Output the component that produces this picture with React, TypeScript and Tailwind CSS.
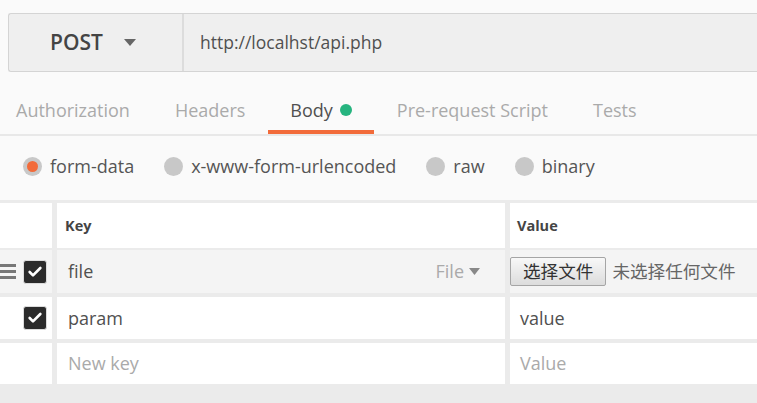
import { Check } from "lucide-react";

const font = { fontFamily: '"Open Sans", "Noto Sans CJK SC", sans-serif' };

function Radio({ label, on }: { label: string; on?: boolean }) {
  return (
    <div className="flex items-center">
      <div className="w-[19px] h-[19px] rounded-full bg-[#c8c8c8] flex items-center justify-center">
        {on && <div className="w-[11px] h-[11px] rounded-full bg-[#f26b3a]" />}
      </div>
      <span className="ml-[8px] text-[18px] text-[#555]">{label}</span>
    </div>
  );
}

function Box() {
  return (
    <div className="w-[24px] h-[24px] rounded-[3px] bg-[#2b2b2b] border border-[#dcdcdc] flex items-center justify-center">
      <Check size={16} strokeWidth={4} color="#fff" />
    </div>
  );
}

export default function App() {
  const tabs = ["Authorization", "Headers", "Body", "Pre-request Script", "Tests"];
  return (
    <div className="w-[757px] h-[403px] overflow-hidden bg-[#fafafa] flex flex-col" style={font}>
      <div className="pt-[13px] pl-[8px]">
        <div className="h-[59px] flex border border-r-0 border-[#d4d4d4] rounded-l-[3px] bg-[#efefef]">
          <div className="w-[175px] border-r-2 border-[#dcdcdc] flex items-center">
            <span className="ml-[41px] text-[21px] font-semibold text-[#444]">POST</span>
            <svg className="ml-[21px]" width="12" height="7" viewBox="0 0 12 7"><path d="M0 0h12L6 7z" fill="#666" /></svg>
          </div>
          <div className="flex items-center pl-[16px] text-[17.5px] text-[#505050]">http://localhst/api.php</div>
        </div>
      </div>

      <div className="h-[64px] flex border-b-2 border-[#e8e8e8] pl-[16px]">
        {tabs.map((t, i) => (
          <div
            key={t}
            className={`h-full flex items-center pt-[18px] border-b-4 ${t === "Body" ? "border-[#f26b3a] text-[#505050]" : "border-transparent text-[#aaa]"} ${i === 0 ? "pr-[22.5px]" : "px-[22.5px]"} text-[18px]`}
          >
            {t}
            {t === "Body" && <span className="ml-[7px] w-[12px] h-[12px] rounded-full bg-[#26b47f]" />}
          </div>
        ))}
      </div>

      <div className="h-[64px] flex items-center gap-[30px] pl-[23px] pb-[4px]">
        <Radio label="form-data" on />
        <Radio label="x-www-form-urlencoded" />
        <Radio label="raw" />
        <Radio label="binary" />
      </div>

      <div className="flex-1 bg-[#ebebeb] pt-[3px] flex flex-col">
        <div className="h-[45px] grid grid-cols-[52px_448px_1fr] gap-x-[5px] text-[14.5px] font-bold text-[#444]">
          <div className="bg-white" />
          <div className="bg-white flex items-center pl-[8px]">Key</div>
          <div className="bg-white flex items-center pl-[7px]">Value</div>
        </div>

        <div className="mt-[2px] h-[43px] grid grid-cols-[52px_448px_1fr] gap-x-[5px] text-[18px] text-[#505050]">
          <div className="bg-[#f4f4f4] flex items-center justify-between pr-[5px]">
            <div className="flex flex-col gap-[3px]">
              <div className="w-[16px] h-[3px] bg-[#777]" />
              <div className="w-[16px] h-[3px] bg-[#777]" />
              <div className="w-[16px] h-[3px] bg-[#777]" />
            </div>
            <Box />
          </div>
          <div className="bg-[#f4f4f4] flex items-center justify-between pl-[11px] pr-[25px]">
            <span>file</span>
            <span className="flex items-center text-[#aaa]">
              File
              <svg className="ml-[5px]" width="11" height="7" viewBox="0 0 11 7"><path d="M0 0h11L5.5 7z" fill="#888" /></svg>
            </span>
          </div>
          <div className="bg-[#f4f4f4] flex items-center">
            <button className="h-[29px] px-[12px] border border-[#a5a5a5] rounded-[2px] bg-gradient-to-b from-[#f8f8f8] to-[#dcdcdc] text-[17.6px] text-[#333] leading-none">
              选择文件
            </button>
            <span className="ml-[6px] text-[17.6px] text-[#666]">未选择任何文件</span>
          </div>
        </div>

        <div className="mt-[4px] h-[42px] grid grid-cols-[52px_448px_1fr] gap-x-[5px] text-[18px] text-[#505050]">
          <div className="bg-white flex items-center justify-end pr-[5px]">
            <Box />
          </div>
          <div className="bg-white flex items-center pl-[11px]">param</div>
          <div className="bg-white flex items-center pl-[10px]">value</div>
        </div>

        <div className="mt-[4px] h-[41px] grid grid-cols-[52px_448px_1fr] gap-x-[5px] text-[18px] text-[#aaa]">
          <div className="bg-white" />
          <div className="bg-white flex items-center pl-[11px]">New key</div>
          <div className="bg-white flex items-center pl-[10px]">Value</div>
        </div>
      </div>
    </div>
  );
}
